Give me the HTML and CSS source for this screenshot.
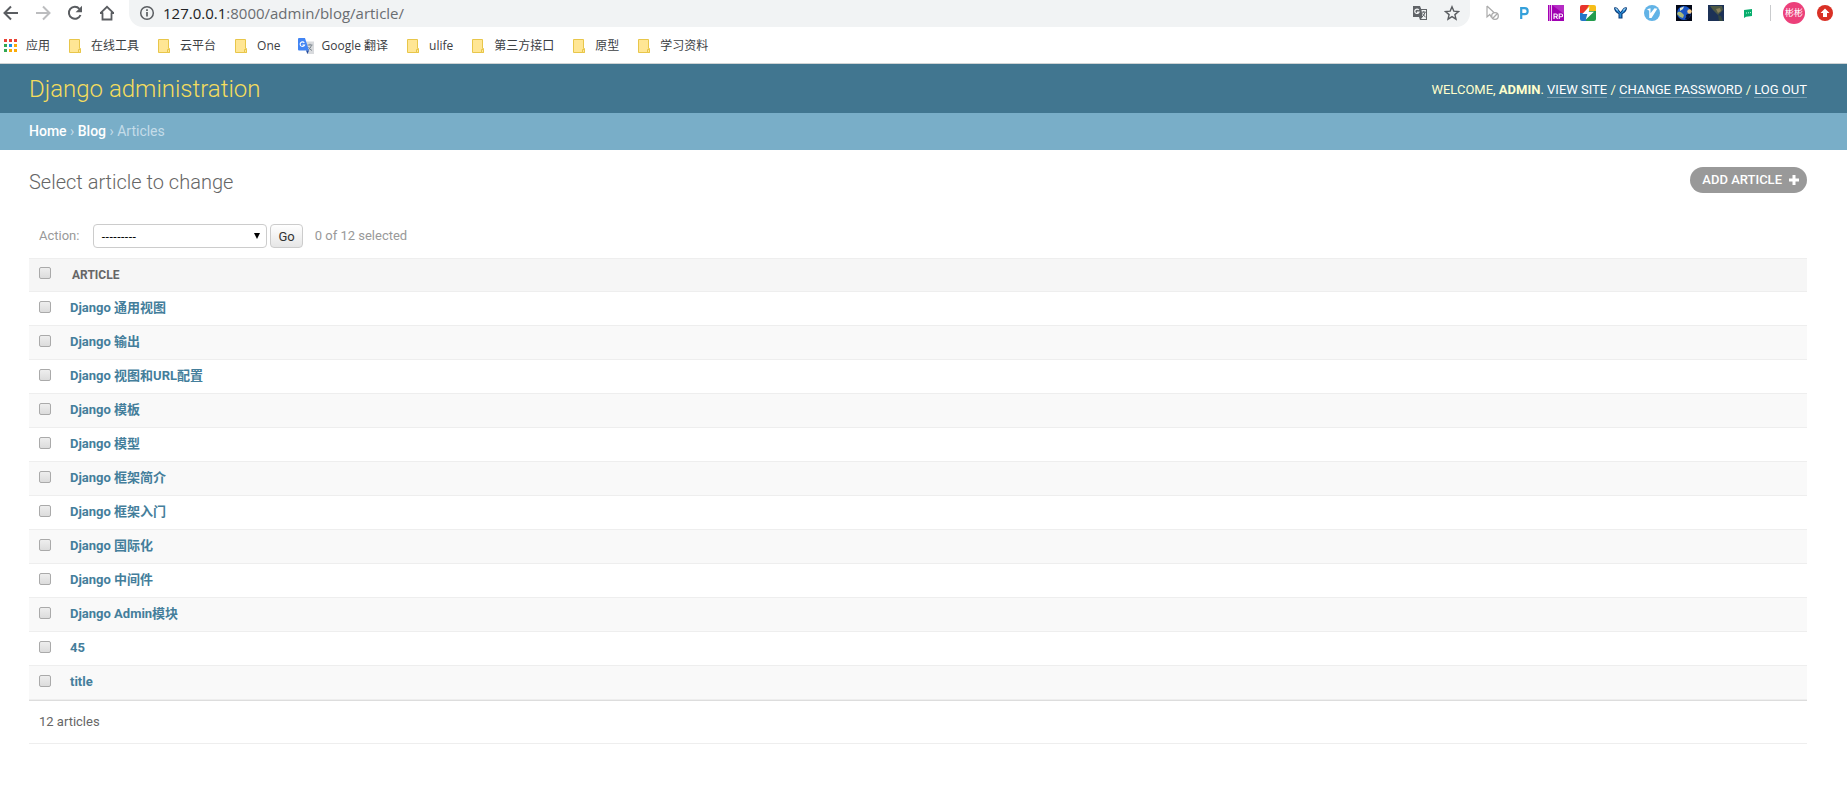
FILE: index.html
```html
<!DOCTYPE html>
<html lang="zh-CN">
<head>
<meta charset="utf-8">
<title>Select article to change | Django site admin</title>
<link rel="stylesheet" href="styles.css">
</head>
<body>
<svg class="defs" aria-hidden="true">
  <symbol id="folder" viewBox="0 0 16 16"><path d="M1.5 1.5h10v9h1v4h-11z" fill="#ffe694" stroke="#e8c64a"/><path d="M10.500 11.500h2v3h-2z" fill="#ffe694" stroke="#e8c64a"/></symbol>
</svg>
<div class="browser">
  <div class="toolbar">
    <nav class="nav-buttons" aria-label="Browser navigation">
      <button class="icon-button" aria-label="Back"><svg viewBox="0 0 16 16"><path d="M15 8H2M8 1.500 1.500 8 8 14.500" fill="none" stroke="#5a5d61" stroke-width="2"/></svg></button>
      <button class="icon-button" aria-label="Forward"><svg viewBox="0 0 16 16"><path d="M1 8h13M8 1.500 14.500 8 8 14.500" fill="none" stroke="#bcbdbf" stroke-width="2"/></svg></button>
      <button class="icon-button" aria-label="Reload"><svg viewBox="0 0 16 16"><path d="M13.500 10A6 6 0 1 1 12.400 3.800" fill="none" stroke="#5a5d61" stroke-width="2"/><path d="M15 .8v6.400H8.600z" fill="#5a5d61"/></svg></button>
      <button class="icon-button" aria-label="Home"><svg viewBox="0 0 16 16"><path d="M1.500 8.200 8 1.800l6.500 6.400M3.500 7.500V14.500h9V7.500M1 8h3M12 8h3" fill="none" stroke="#5a5d61" stroke-width="1.800"/></svg></button>
    </nav>
    <div class="address">
      <svg class="icon" viewBox="0 0 16 16"><circle cx="8" cy="8" r="6.300" fill="none" stroke="#5a5d61" stroke-width="1.500"/><path d="M8 7v4.500M8 4.200v1.700" stroke="#5a5d61" stroke-width="1.700"/></svg>
      <span class="url"><span class="host">127.0.0.1</span>:8000/admin/blog/article/</span>
      <svg class="icon" viewBox="0 0 16 16"><path d="M1 1h7l1.200 3H15v11H8l-1-3H1z" fill="#606367"/><path d="M9.500 5H14v9H9l1.500-2z" fill="#f1f3f4"/><path d="M6.800 5A2.200 2.200 0 1 0 7 7.200H5" fill="none" stroke="#f1f3f4" stroke-width="1.200"/><path d="M9.800 7.200h4M11.800 6v1.200M13 7.500q-1 3.200-3 4.500M10.600 8.500q1 2.500 3 3.500" fill="none" stroke="#606367"/></svg>
      <svg class="icon" viewBox="0 0 16 16"><path d="m8 1.800 1.800 4.300 4.700.4-3.600 3.100 1.100 4.600L8 11.700l-4 2.500 1.100-4.600-3.600-3.100 4.700-.4z" fill="none" stroke="#5a5d61" stroke-width="1.400"/></svg>
    </div>
    <div class="extensions">
      <svg class="icon" viewBox="0 0 16 16"><path d="M3 1v11l2.800-2.500 1.700 3M3 1l7.500 7" fill="none" stroke="#aaa" stroke-width="1.200"/><circle cx="11" cy="11" r="3.300" fill="#fff" stroke="#aaa" stroke-width="1.300"/><path d="m8.800 13.200 4.400-4.400" stroke="#aaa" stroke-width="1.300"/></svg>
      <svg class="icon" viewBox="0 0 16 16"><path d="M5.200 14V3.200h3.500a2.900 2.900 0 0 1 0 5.900H5.200" fill="none" stroke="#35a0da" stroke-width="2.200"/></svg>
      <svg class="icon" viewBox="0 0 16 16"><path d="M0 0h3v16H0z" fill="#a400b4"/><path d="M1.500 0v16M3.500 0v16" stroke="#e6a6ea" stroke-width=".7"/><path d="M4 0h12v16H4z" fill="#a000b2"/><path d="m4 0 12 9V0z" fill="#b52bc4"/><path d="M6 14V9h2a1.300 1.300 0 0 1 0 2.700H6M8 11.500 9.500 14M11.200 14V9h2a1.400 1.400 0 0 1 0 2.800h-2" fill="none" stroke="#fff" stroke-width="1.100"/></svg>
      <svg class="icon" viewBox="0 0 16 16"><path d="M2 0h9L5 10H0V2q0-2 2-2z" fill="#e8342c"/><path d="M9 0h5q2 0 2 2v5H5z" fill="#f6bd18"/><path d="M0 8h8v8H2q-2 0-2-2z" fill="#2377c9"/><path d="M8 6h8v8q0 2-2 2H6z" fill="#239c4d"/><path d="M9.500 1.500 2.300 9h5l-1.500 5.500L14 6.700H8.800z" fill="#fff"/></svg>
      <svg class="icon" viewBox="0 0 16 16"><path d="M2 2.500q3-1 4.200 1.500L8.500 7l2.300-3Q12 1.800 15 2.500q0 4-4.500 6.500v4.500h-4V9Q2 6.500 2 2.500z" fill="#0a3a78"/><path d="M3 3.200q2 0 3 2L8.500 8.500 11 5q1-2 3-1.800-1 3.800-4.700 5.300v4H7.500v-4Q4 7 3 3.200z" fill="#2a8fd8"/><path d="M3 3q2 0 2.600 1.500l.6 1.500Q4 5.500 3 3zM14 3q-2 0-2.600 1.500L11 6q2-.8 3-3z" fill="#a9dcf8"/></svg>
      <svg class="icon" viewBox="0 0 16 16"><circle cx="8" cy="8" r="8" fill="#62b3e6"/><path d="M3 4.300 6.500 3.300v5l4-5 2.800.5L7.500 13H5.200V5.800z" fill="#fff"/></svg>
      <svg class="icon" viewBox="0 0 16 16"><path fill="#030817" d="M0 0h16v16H0z"/><circle cx="8" cy="8" r="7" fill="#1a55c4"/><path d="M2 7q2-1 4 1l2 2-1 3-3-1-3-3z" fill="#a9b878"/><path d="m4 3 4-1.500L7 4 4 6z" fill="#dfe6d0"/><path d="M10 10q3-2 5-1l-2 4q-2 2-4 1 2-2 1-4z" fill="#071230"/><circle cx="13.500" cy="6.500" r="2.200" fill="#f2c98a"/></svg>
      <svg class="icon" viewBox="0 0 16 16"><path fill="#1c3156" d="M0 0h16v16H0z"/><path d="M2 1h12l1 4-3 3-2 2-2-2-3-3z" fill="#4d5844"/><path d="m8 4 4-1 1 3-3 2z" fill="#8a7f58"/><path d="m10 10 3 1 2 5h-4z" fill="#33463f"/></svg>
      <svg class="icon" viewBox="0 0 16 16"><path d="m4 5 8-1v7l-6 .8L4 13z" fill="#08ad6d"/><path d="M6 8h1M8 7.800h1M10 7.600h1" stroke="#c2ffe5"/></svg>
    </div>
    <div class="profile">
      <span class="avatar">彬彬</span>
      <svg class="icon" viewBox="0 0 16 16"><circle cx="8" cy="8" r="8" fill="#d93025"/><path d="m8 3.500 4.500 4.500H10v4H6V8H3.500z" fill="#fff"/></svg>
    </div>
  </div>
  <nav class="bookmarks" aria-label="Bookmarks">
    <a class="bookmark" href="#"><svg class="icon" viewBox="0 0 16 16"><path d="M1 1h3v3H1zM6 1h3v3H6zM11 1h3v3h-3z" fill="#ea4335"/><path d="M1 6h3v3H1zM1 11h3v3H1z" fill="#31a853"/><path d="M6 6h3v3H6z" fill="#168eea"/><path d="M11 6h3v3h-3zM6 11h3v3H6zM11 11h3v3h-3z" fill="#fbab08"/></svg>应用</a>
    <a class="bookmark" href="#"><svg class="icon"><use href="#folder"/></svg>在线工具</a>
    <a class="bookmark" href="#"><svg class="icon"><use href="#folder"/></svg>云平台</a>
    <a class="bookmark" href="#"><svg class="icon"><use href="#folder"/></svg>One</a>
    <a class="bookmark" href="#"><svg class="icon" viewBox="0 0 16 16"><path d="M7 3.500h9V16H9z" fill="#d8dadd"/><path d="M9.500 7h5M12 5.800V7M13.500 7.200q-.8 3.200-3.500 5M10.500 9q1.200 2.500 3.500 3.500" fill="none" stroke="#7e8890"/><path d="M1 0h6l4 12.500H1q-1 0-1-1V1q0-1 1-1z" fill="#4285f4"/><path d="M8 12.500h3L9.500 16z" fill="#244da3"/><path d="M6.300 4.800A2.300 2.300 0 1 0 6.600 7H4.400" fill="none" stroke="#fff" stroke-width="1.100"/></svg>Google 翻译</a>
    <a class="bookmark" href="#"><svg class="icon"><use href="#folder"/></svg>ulife</a>
    <a class="bookmark" href="#"><svg class="icon"><use href="#folder"/></svg>第三方接口</a>
    <a class="bookmark" href="#"><svg class="icon"><use href="#folder"/></svg>原型</a>
    <a class="bookmark" href="#"><svg class="icon"><use href="#folder"/></svg>学习资料</a>
  </nav>
</div>

<header class="header">
  <h1 class="branding"><a href="#">Django administration</a></h1>
  <div class="user-tools">Welcome, <strong>admin</strong>. <a href="#">View site</a> / <a href="#">Change password</a> / <a href="#">Log out</a></div>
</header>
<nav class="breadcrumbs" aria-label="Breadcrumbs"><a href="#">Home</a> › <a href="#">Blog</a> › Articles</nav>

<main class="content">
  <div class="title-row">
    <h2 class="title">Select article to change</h2>
    <a class="add-link" href="#">Add article <svg viewBox="0 0 10 10"><path d="M5 0v10M0 5h10" stroke="#fff" stroke-width="3"/></svg></a>
  </div>
  <form class="changelist">
    <div class="actions">
      <label for="action">Action:</label>
      <span class="select-wrap">
        <select id="action"><option>---------</option></select>
        <svg class="arrow" viewBox="0 0 6 6"><path d="M0 0h6L3 6z"/></svg>
      </span>
      <button class="go" type="button">Go</button>
      <span class="counter">0 of 12 selected</span>
    </div>
    <table class="results">
      <thead><tr><th class="check"><input type="checkbox" aria-label="Select all"></th><th class="heading">Article</th></tr></thead>
      <tbody>
        <tr><td class="check"><input type="checkbox" aria-label="Django 通用视图"></td><th><a href="#">Django 通用视图</a></th></tr>
        <tr><td class="check"><input type="checkbox" aria-label="Django 输出"></td><th><a href="#">Django 输出</a></th></tr>
        <tr><td class="check"><input type="checkbox" aria-label="Django 视图和URL配置"></td><th><a href="#">Django 视图和URL配置</a></th></tr>
        <tr><td class="check"><input type="checkbox" aria-label="Django 模板"></td><th><a href="#">Django 模板</a></th></tr>
        <tr><td class="check"><input type="checkbox" aria-label="Django 模型"></td><th><a href="#">Django 模型</a></th></tr>
        <tr><td class="check"><input type="checkbox" aria-label="Django 框架简介"></td><th><a href="#">Django 框架简介</a></th></tr>
        <tr><td class="check"><input type="checkbox" aria-label="Django 框架入门"></td><th><a href="#">Django 框架入门</a></th></tr>
        <tr><td class="check"><input type="checkbox" aria-label="Django 国际化"></td><th><a href="#">Django 国际化</a></th></tr>
        <tr><td class="check"><input type="checkbox" aria-label="Django 中间件"></td><th><a href="#">Django 中间件</a></th></tr>
        <tr><td class="check"><input type="checkbox" aria-label="Django Admin模块"></td><th><a href="#">Django Admin模块</a></th></tr>
        <tr><td class="check"><input type="checkbox" aria-label="45"></td><th><a href="#">45</a></th></tr>
        <tr><td class="check"><input type="checkbox" aria-label="title"></td><th><a href="#">title</a></th></tr>
      </tbody>
    </table>
    <p class="paginator">12 articles</p>
  </form>
</main>
</body>
</html>
```
FILE: styles.css
```css
* { box-sizing: border-box; }
body {
  margin: 0;
  background: #fff;
  color: #333;
  font: 13px/16px Roboto, "Noto Sans CJK SC", sans-serif;
}
a { text-decoration: none; }
.defs { display: none; }
.icon { display: block; flex: none; width: 16px; height: 16px; }

/* Browser chrome */
.browser {
  border-bottom: 1px solid #cfd3d4;
  font-family: "Open Sans", "Noto Sans CJK SC", sans-serif;
}
.toolbar { display: flex; align-items: center; height: 27px; padding-right: 14px; }
.nav-buttons { display: flex; gap: 16px; padding: 0 14px 2px 3px; }
.icon-button { width: 16px; height: 16px; padding: 0; border: 0; background: none; }
.icon-button svg { display: block; width: 16px; height: 16px; }
.address {
  display: flex;
  flex: 1;
  align-items: center;
  gap: 16px;
  height: 27px;
  padding: 0 10px 2px;
  border-radius: 0 0 14px 14px;
  background: #f1f3f4;
}
.url { flex: 1; margin-left: -8px; color: #6a6d71; font-size: 15px; line-height: 24px; }
.host { color: #202124; }
.extensions { display: flex; gap: 16px; padding: 0 14px 2px 14px; }
.profile {
  display: flex;
  align-items: center;
  gap: 12px;
  height: 22px;
  margin-bottom: 2px;
}
.profile::before { content: ""; width: 1px; height: 16px; background: #c9cbcd; }
.avatar {
  width: 22px;
  border-radius: 50%;
  background: #ec407a;
  color: #fff;
  font-size: 9px;
  line-height: 22px;
  text-align: center;
}
.bookmarks { display: flex; gap: 18px; height: 36px; padding: 1px 3px 0; align-items: center; }
.bookmark { display: flex; align-items: center; gap: 7px; color: #3c4043; font-size: 12px; white-space: nowrap; }

/* Admin header */
.header {
  display: flex;
  align-items: center;
  justify-content: space-between;
  padding: 11px 40px 9px 29px;
  background: #417690;
  color: #ffc;
}
.branding { margin: 0; font-size: 24px; font-weight: 300; line-height: 29px; }
.branding a { color: #f5dd5d; }
.user-tools { font-size: 13px; text-transform: uppercase; }
.user-tools a { border-bottom: 1px solid #7a9fb1; color: #fff; }
.breadcrumbs {
  padding: 10px 29px 11px;
  background: #79aec8;
  color: #c4dce8;
  font-size: 14px;
}
.breadcrumbs a { color: #fff; font-weight: 500; }

/* Change list */
.content { padding: 17px 40px 40px 29px; }
.title-row { display: flex; align-items: flex-start; justify-content: space-between; }
.title { margin: 3px 0 0; color: #666; font-size: 20px; font-weight: 300; line-height: 24px; }
.add-link {
  display: flex;
  align-items: center;
  gap: 7px;
  padding: 5px 8px 5px 12px;
  border-radius: 13px;
  background: #999;
  color: #fff;
  font-size: 13px;
  font-weight: 500;
  text-transform: uppercase;
}
.add-link svg { width: 10px; height: 10px; }
.actions {
  display: flex;
  align-items: center;
  margin-top: 20px;
  padding: 10px;
  color: #999;
}
.select-wrap { position: relative; margin: 0 3px 0 14px; }
.select-wrap select {
  display: block;
  width: 174px;
  height: 24px;
  padding: 0 7px;
  border: 1px solid #ccc;
  border-radius: 4px;
  appearance: none;
  background: #fff;
  color: #000;
  font: 12px "Open Sans", sans-serif;
}
.arrow { position: absolute; top: 9px; right: 7px; width: 6px; height: 6px; }
.go {
  height: 24px;
  padding: 0 7px;
  border: 1px solid #ccc;
  border-radius: 4px;
  background: linear-gradient(#fff, #e6e6e6);
  color: #333;
  font: 13px Roboto, sans-serif;
}
.counter { margin-left: 12px; }
.results { width: 100%; border-collapse: separate; border-spacing: 0; }
.results th, .results td {
  height: 34px;
  padding: 0 8px;
  border-bottom: 1px solid #eee;
  text-align: left;
  vertical-align: middle;
}
.results tbody th { padding-bottom: 2px; }
.results .check { width: 33px; padding: 0 0 4px 10px; }
.results thead th { border-top: 1px solid #eee; background: #f6f6f6; }
.results .heading { padding-left: 10px; color: #666; font-size: 12px; text-transform: uppercase; }
.results tbody tr:nth-child(even) { background: #f9f9f9; }
.results a { color: #447e9b; }
.results input {
  display: block;
  width: 12px;
  height: 12px;
  margin: 0;
  border: 1px solid #aaa;
  border-radius: 2px;
  appearance: none;
  background: linear-gradient(#eee, #dcdcdc);
}
.paginator {
  margin: 0;
  padding: 13px 10px;
  border-top: 1px solid #ddd;
  border-bottom: 1px solid #eee;
  color: #666;
  font-size: 13px;
}
```
